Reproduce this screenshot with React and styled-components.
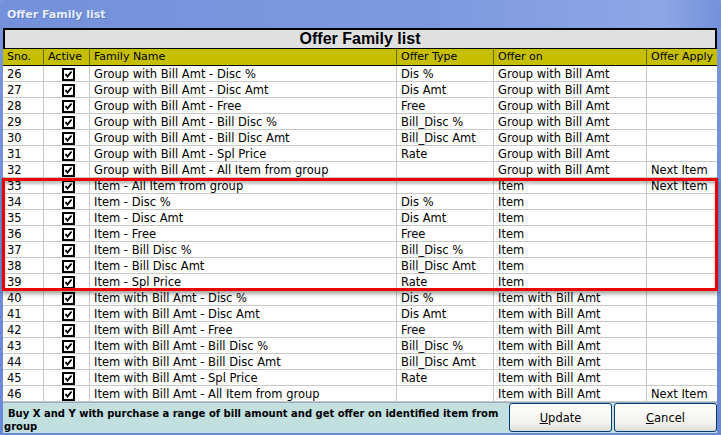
import styled, { createGlobalStyle } from "styled-components";

const GlobalStyle = createGlobalStyle`
  html, body {
    margin: 0;
    padding: 0;
    background: #ffffff;
  }
  * {
    box-sizing: border-box;
  }
`;

const COLS = "40px 46px 307px 97px 153px 1fr";

const rows = [
  [26, "Group with Bill Amt - Disc %", "Dis %", "Group with Bill Amt", ""],
  [27, "Group with Bill Amt - Disc Amt", "Dis Amt", "Group with Bill Amt", ""],
  [28, "Group with Bill Amt - Free", "Free", "Group with Bill Amt", ""],
  [29, "Group with Bill Amt - Bill Disc %", "Bill_Disc %", "Group with Bill Amt", ""],
  [30, "Group with Bill Amt - Bill Disc Amt", "Bill_Disc Amt", "Group with Bill Amt", ""],
  [31, "Group with Bill Amt - Spl Price", "Rate", "Group with Bill Amt", ""],
  [32, "Group with Bill Amt - All Item from group", "", "Group with Bill Amt", "Next Item"],
  [33, "Item - All Item from group", "", "Item", "Next Item"],
  [34, "Item - Disc %", "Dis %", "Item", ""],
  [35, "Item - Disc Amt", "Dis Amt", "Item", ""],
  [36, "Item - Free", "Free", "Item", ""],
  [37, "Item - Bill Disc %", "Bill_Disc %", "Item", ""],
  [38, "Item - Bill Disc Amt", "Bill_Disc Amt", "Item", ""],
  [39, "Item - Spl Price", "Rate", "Item", ""],
  [40, "Item with Bill Amt - Disc %", "Dis %", "Item with Bill Amt", ""],
  [41, "Item with Bill Amt - Disc Amt", "Dis Amt", "Item with Bill Amt", ""],
  [42, "Item with Bill Amt - Free", "Free", "Item with Bill Amt", ""],
  [43, "Item with Bill Amt - Bill Disc %", "Bill_Disc %", "Item with Bill Amt", ""],
  [44, "Item with Bill Amt - Bill Disc Amt", "Bill_Disc Amt", "Item with Bill Amt", ""],
  [45, "Item with Bill Amt - Spl Price", "Rate", "Item with Bill Amt", ""],
  [46, "Item with Bill Amt - All Item from group", "", "Item with Bill Amt", "Next Item"],
];

const Window = styled.div`
  width: 721px;
  height: 435px;
  display: flex;
  flex-direction: column;
  background: linear-gradient(180deg, #7a96dc 0%, #6a88d6 100%);
  padding: 0 4px 3px 3px;
  font-family: "DejaVu Sans", Tahoma, sans-serif;
  overflow: hidden;
`;

const TitleBar = styled.div`
  height: 28px;
  flex: none;
  display: flex;
  align-items: center;
  margin: 0 -4px 0 -3px;
  padding-left: 7px;
  background: linear-gradient(90deg, #7390da 0%, #7e99df 60%, #8ea6e6 92%, #7390da 100%);
  border-radius: 6px 6px 0 0;
  color: #e8eefa;
  font-family: "DejaVu Sans", Tahoma, sans-serif;
  font-weight: bold;
  font-size: 11px;
  text-shadow: 1px 1px 0 #5c78c4;
`;

const Body = styled.div`
  flex: 1;
  display: flex;
  flex-direction: column;
  background: #ffffff;
  position: relative;
`;

const Heading = styled.div`
  height: 21px;
  flex: none;
  display: flex;
  align-items: center;
  justify-content: center;
  background: #e0e0e0;
  border: 2px solid #000;
  border-bottom-width: 1px;
  font-family: "Liberation Sans", Arial, sans-serif;
  font-weight: bold;
  font-size: 16px;
  color: #000;
`;

const HeaderRow = styled.div`
  display: grid;
  grid-template-columns: ${COLS};
  height: 17px;
  flex: none;
  background: #c6bf00;
  border-bottom: 1px solid #000;
`;

const HeaderCell = styled.div`
  padding: 1px 0 0 4px;
  font-size: 11px;
  color: #000;
  white-space: nowrap;
  overflow: hidden;
  border-left: ${(p) => (p.$first ? "none" : "1px solid #6a6600")};
`;

const Grid = styled.div`
  flex: none;
  display: flex;
  flex-direction: column;
`;

const Row = styled.div`
  display: grid;
  grid-template-columns: ${COLS};
  height: 16px;
  border-bottom: 1px solid #c8c8c8;
`;

const Cell = styled.div`
  padding: 1px 0 0 4px;
  font-size: 11.5px;
  color: #000;
  white-space: nowrap;
  overflow: hidden;
  display: flex;
  align-items: center;
  justify-content: ${(p) => (p.$center ? "center" : "flex-start")};
  border-left: ${(p) => (p.$first ? "none" : "1px solid #c8c8c8")};
`;

const Highlight = styled.div`
  position: absolute;
  left: -1px;
  right: -1px;
  top: 150px;
  height: 113px;
  border: 3px solid #ee0000;
  box-shadow: 0 3px 4px rgba(0, 0, 0, 0.35), inset 0 3px 3px rgba(0, 0, 0, 0.25);
  pointer-events: none;
`;

const Footer = styled.div`
  flex: 1;
  display: flex;
  background: #c2e0e0;
  border-top: 1px solid #9ab;
`;

const Message = styled.div`
  flex: 1;
  padding: 4px 4px 0 1px;
  font-family: "DejaVu Sans", Tahoma, sans-serif;
  font-weight: bold;
  font-size: 10px;
  line-height: 13px;
  color: #000;
  text-indent: 4px;
`;

const Button = styled.button`
  width: 103px;
  height: 29px;
  margin-left: 2px;
  border: 1px solid #003c74;
  border-radius: 3px;
  background: linear-gradient(180deg, #ffffff 0%, #f4f3ee 70%, #dcdad2 100%);
  font-family: "DejaVu Sans", Tahoma, sans-serif;
  font-size: 11.5px;
  color: #000;
  padding: 0;

  & u {
    text-decoration: underline;
  }
`;

const CheckBox = () => (
  <svg width="13" height="13" viewBox="0 0 13 13">
    <rect x="0" y="0" width="13" height="13" fill="#000" />
    <rect x="2" y="2" width="9" height="9" fill="#fff" />
    <path d="M3.5 6 L5.5 8.5 L9.5 3.5" fill="none" stroke="#000" strokeWidth="2" />
  </svg>
);

export default function App() {
  return (
    <>
      <GlobalStyle />
      <Window>
        <TitleBar>Offer Family list</TitleBar>
        <Body>
          <Heading>Offer Family list</Heading>
          <HeaderRow>
            <HeaderCell $first>Sno.</HeaderCell>
            <HeaderCell>Active</HeaderCell>
            <HeaderCell>Family Name</HeaderCell>
            <HeaderCell>Offer Type</HeaderCell>
            <HeaderCell>Offer on</HeaderCell>
            <HeaderCell>Offer Apply</HeaderCell>
          </HeaderRow>
          <Grid>
            {rows.map(([sno, name, type, on, apply]) => (
              <Row key={sno}>
                <Cell $first>{sno}</Cell>
                <Cell $center>
                  <CheckBox />
                </Cell>
                <Cell>{name}</Cell>
                <Cell>{type}</Cell>
                <Cell>{on}</Cell>
                <Cell>{apply}</Cell>
              </Row>
            ))}
          </Grid>
          <Highlight />
          <Footer>
            <Message>
              Buy X and Y with purchase a range of bill amount and get offer on identified item from group
            </Message>
            <Button>
              <u>U</u>pdate
            </Button>
            <Button>
              <u>C</u>ancel
            </Button>
          </Footer>
        </Body>
      </Window>
    </>
  );
}
